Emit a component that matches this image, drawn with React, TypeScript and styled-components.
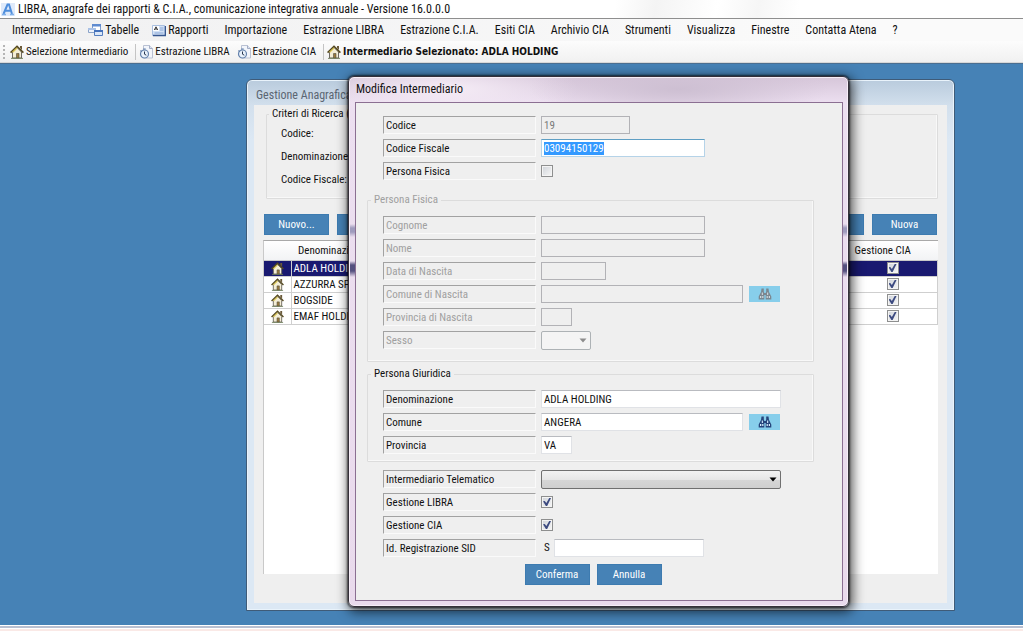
import React, { useEffect, useRef, useState } from "react";
import styled, { createGlobalStyle, css } from "styled-components";

const UI = `"Roboto Condensed", Roboto, "Open Sans", sans-serif`;
const TOOL = `"DejaVu Sans Condensed", "DejaVu Sans", sans-serif`;
const FORM = `"Roboto Condensed", Roboto, "Liberation Sans", sans-serif`;

const GlobalStyle = createGlobalStyle`
  * { box-sizing: border-box; }
  body { margin: 0; font: 11px/14px ${FORM}; color: #111; }
  button, input, select { font: inherit; color: inherit; margin: 0; }
`;

const Shell = styled.div`
  display: flex;
  flex-direction: column;
  height: 100vh;
  min-height: 600px;
  overflow: hidden;
`;

const TitleBar = styled.header`
  display: flex;
  align-items: center;
  gap: 3px;
  height: 19px;
  padding-left: 1px;
  border-bottom: 1px solid #8e8e8e;
  background: linear-gradient(100deg, #fff 60%, #f4f4f4 64%, #fff 70%, #f6f6f6 74%, #fff 78%);
  font: 12px/18px ${UI};
  white-space: nowrap;
`;

const MenuBar = styled.nav`
  display: flex;
  align-items: center;
  gap: 16px;
  height: 22px;
  padding-left: 12px;
  background: linear-gradient(90deg, #f0f0f1, #fafafa 80%);
`;

const MenuItem = styled.button`
  display: flex;
  align-items: center;
  gap: 2px;
  padding: 0;
  border: 0;
  background: none;
  font: 12px/16px ${UI};
  white-space: nowrap;
  svg { margin-left: -3px; }
`;

const ToolBar = styled.div`
  display: flex;
  align-items: center;
  gap: 7px;
  height: 22px;
  padding-left: 3px;
  background: linear-gradient(#fcfcfc, #f1f1f1);
  border-bottom: 1px solid #d8d8d8;
`;

const Grip = styled.span`
  width: 2px;
  height: 14px;
  margin-right: -2px;
  background: repeating-linear-gradient(#b5b5b5 0 2px, transparent 2px 4px);
`;

const Separator = styled.span`
  width: 1px;
  height: 16px;
  margin-right: -4px;
  background: #c4c4c4;
`;

const ToolItem = styled.button<{ $strong?: boolean }>`
  display: flex;
  align-items: center;
  gap: 2px;
  padding: 0;
  border: 0;
  background: none;
  font: ${(p) => (p.$strong ? `bold 10px/14px ${TOOL}` : `11px/14px ${UI}`)};
  white-space: nowrap;
`;

const Desktop = styled.main`
  position: relative;
  flex: 1;
  background: #4682b6;
  border-top: 1px solid #4b6f91;
  overflow: hidden;
`;

const StatusStrip = styled.footer`
  height: 6px;
  border-top: 1px solid #fff;
  background: linear-gradient(#b9bfd0 0 2px, #fff 2px 3px, #fae9e6 3px);
`;

const SearchWindow = styled.section`
  position: absolute;
  left: 246px;
  top: 15px;
  width: 709px;
  height: 532px;
  display: flex;
  flex-direction: column;
  padding: 0 7px 7px;
  border: 1px solid #3f5b78;
  border-radius: 6px 6px 0 0;
  background: linear-gradient(#b9cbdd, #d3e0ed 26px, #dce8f4 60px);
  box-shadow: inset 0 0 0 1px #e9f3fb;
`;

const WindowTitle = styled.h2<{ $dim?: boolean }>`
  flex: none;
  height: 25px;
  margin: 0;
  padding-left: ${(p) => (p.$dim ? "2px" : "1px")};
  font: 12px/${(p) => (p.$dim ? "30px" : "25px")} ${UI};
  color: ${(p) => (p.$dim ? "#5b6672" : "#111")};
`;

const SearchBody = styled.div`
  flex: 1;
  display: flex;
  flex-direction: column;
  padding: 2px 9px 29px;
  background: #efefef;
`;

const Group = styled.fieldset<{ $roomy?: boolean }>`
  margin: 0;
  padding: 9px 14px ${(p) => (p.$roomy ? "7px" : "2px")} 15px;
  border: 1px solid #dcdcdc;
  border-radius: 1px;
  box-shadow: inset -1px -1px #f8f8f8;
  min-width: 0;
  &:disabled { color: #a0a0a0; }
`;

const Legend = styled.legend`
  height: 14px;
  padding: 0 3px;
  margin-left: -12px;
`;

const Criteria = styled(Group)`
  margin-left: 3px;
  padding: 1px 14px 7px 14px;
`;

const CriteriaRow = styled.div`
  display: grid;
  grid-template-columns: 84px 160px;
  align-items: center;
  height: 23px;
`;

const CommandBar = styled.div`
  display: flex;
  gap: 8px;
  margin: 15px 1px 0;
`;

const Spacer = styled.span`
  flex: 1;
`;

const ActionButton = styled.button`
  width: 65px;
  height: 21px;
  padding: 0;
  border: 1px solid #3d7bb0;
  background: #4682b6;
  color: #fff;
  line-height: 18px;
`;

const ListPanel = styled.div`
  flex: 1;
  margin-top: 5px;
  border-top: 1px solid #a9a9a9;
  border-left: 1px solid #c9c9c9;
  background: #fff;
`;

const List = styled.table`
  width: 100%;
  border-collapse: collapse;
  table-layout: fixed;
`;

const HeadCell = styled.th<{ $w?: number }>`
  width: ${(p) => (p.$w ? `${p.$w}px` : "auto")};
  height: 19px;
  padding: 2px 6px 0 7px;
  background: linear-gradient(#fff, #f2f3f5);
  border-bottom: 1px solid #c8c8c8;
  font-weight: normal;
  text-align: left;
`;

const ListRow = styled.tr<{ $selected?: boolean }>`
  height: 16px;
  background: ${(p) => (p.$selected ? "#191970" : "#fff")};
  color: ${(p) => (p.$selected ? "#fff" : "#111")};
`;

const Cell = styled.td<{ $center?: boolean }>`
  padding: 0 2px;
  border: 1px solid #cfcfcf;
  border-top: 0;
  border-left: 0;
  line-height: 15px;
  text-align: ${(p) => (p.$center ? "center" : "left")};
  white-space: nowrap;
  svg, input { display: block; margin: 0 auto; }
`;

const Dialog = styled.form`
  position: absolute;
  left: 348px;
  top: 12px;
  width: 501px;
  height: 531px;
  display: flex;
  flex-direction: column;
  padding: 0 5px 5px 6px;
  border: 1px solid #35303a;
  border-radius: 6px;
  background:
    linear-gradient(90deg, #fff 0 1px, transparent 1px 498px, #fff 498px),
    linear-gradient(transparent 147px, #9f9bbd 151px 155px, transparent 160px 184px, #55517f 188px 194px, transparent 200px),
    radial-gradient(ellipse 150px 30px at 330px 12px, #cdbfd2, transparent),
    radial-gradient(ellipse 130px 30px at 100px 12px, #f5ecf6, transparent),
    linear-gradient(#d6c6d9, #ecdff0 26px, #e9daec);
  box-shadow: inset 0 0 0 1px #f6eef7, 0 0 2px 1px rgba(0, 0, 0, 0.6), 2px 3px 12px 2px rgba(0, 0, 0, 0.65);
`;

const DialogBody = styled.div`
  flex: 1;
  display: flex;
  flex-direction: column;
  gap: 5px;
  padding: 13px 28px 0 11px;
  border: 1px solid #8b6f92;
  background: #efefef;
`;

const Block = styled.div<{ $before?: boolean }>`
  padding-left: 16px;
  ${(p) => (p.$before ? "padding-bottom: 3px;" : "padding-top: 3px;")}
`;

const Row = styled.div`
  display: grid;
  grid-template-columns: 153px 1fr;
  column-gap: 5px;
  align-items: start;
  height: 23px;
`;

const FieldLabel = styled.label`
  height: 18px;
  padding-left: 2px;
  border: 1px solid;
  border-color: #a2a2a2 #fafafa #fafafa #a2a2a2;
  line-height: 18px;
  white-space: nowrap;
`;

const Controls = styled.div`
  display: flex;
  align-items: center;
  gap: 6px;
  height: 18px;
`;

const fieldEdge = css`
  border: 1px solid #e0e2e6;
  border-top-color: #b9bbc0;
  background: #fff;
`;

const TextBox = styled.input<{ $w: number }>`
  width: ${(p) => p.$w}px;
  height: 18px;
  padding: 0 2px;
  border-radius: 0;
  outline: 0;
  ${fieldEdge}
  &:focus { border-color: #5f9fc4 #b5d3e8 #b5d3e8; }
  &:disabled { border-color: #b2b2b6; background: #efefef; color: #7a7a7a; }
  &::selection { background: #3399ff; color: #fff; }
`;

const Tick = styled.input.attrs({ type: "checkbox" })`
  appearance: none;
  flex: none;
  position: relative;
  width: 12px;
  height: 12px;
  border: 1px solid #8e8f8f;
  background: linear-gradient(135deg, #cfd3d9, #f7f7f7);
  box-shadow: inset 0 0 0 1px #f4f4f4;
  &:checked::before {
    content: "";
    position: absolute;
    inset: 1px;
    background: #3c4a80;
    clip-path: polygon(0 42%, 22% 36%, 42% 62%, 78% 0, 100% 0, 52% 100%, 36% 100%);
  }
`;

const SelectWrap = styled.div<{ $w: number }>`
  display: flex;
  align-items: center;
  width: ${(p) => p.$w}px;
  height: 19px;
  svg { flex: none; margin-left: -12px; pointer-events: none; }
`;

const Select = styled.select`
  appearance: none;
  width: 100%;
  height: 19px;
  padding: 0 14px 0 3px;
  border: 1px solid #707070;
  border-radius: 2px;
  background: linear-gradient(#f2f2f2, #e6e6e6 50%, #d6d6d6 52%, #cfcfcf);
  &:disabled { border-color: #adb2b5; background: #f4f4f4; opacity: 1; }
`;

const FindButton = styled.button`
  display: flex;
  align-items: center;
  justify-content: center;
  width: 31px;
  height: 16px;
  padding: 0;
  border: 0;
  background: #87ceeb;
`;

const Prefix = styled.span`
  width: 7px;
  padding-left: 3px;
`;

const Buttons = styled.div`
  display: flex;
  justify-content: center;
  gap: 7px;
  margin-top: -3px;
  padding-left: 5px;
`;

const HouseIcon = ({ size = 14 }: { size?: number }) => (
  <svg width={size} height={size} viewBox="0 0 14 14" aria-hidden="true">
    <path d="M10 1h2v4l-2-2z" fill="#6b5a3a" />
    <path d="M2.5 7 7 2.5 11.5 7v6h-9z" fill="#f4eed6" stroke="#5f5a52" strokeWidth=".9" />
    <path d="M.6 7.600 7 1.200l6.400 6.400" fill="none" stroke="#54481f" strokeWidth="1.500" />
    <path d="M2.600 7.300 7 3" stroke="#d9c34f" strokeWidth="1.200" />
    <path d="M6.500 8.500h2.500V13H6.500z" fill="#9a7b3c" stroke="#4f4a42" strokeWidth=".6" />
    <path d="M1 13.400h12" stroke="#6f7f5a" strokeWidth=".9" />
  </svg>
);

const ClockPageIcon = () => (
  <svg width="14" height="14" viewBox="0 0 14 14" aria-hidden="true">
    <path d="M4.500.5h6l3 3v9.500h-9z" fill="#f2f5fb" stroke="#b9c1d3" />
    <path d="M10.500.5v3h3" fill="#dbe2f1" stroke="#a3adc4" />
    <circle cx="5.500" cy="9" r="4" fill="#e8f1fb" stroke="#6482ac" strokeWidth="1.200" />
    <path d="M5.500 6.500v2.700l1.800 1" fill="none" stroke="#26354f" />
    <path d="M4.300 4h2.400M1.500 5.500l1 1" stroke="#5878a6" strokeWidth="1.200" />
  </svg>
);

const TablesIcon = () => (
  <svg width="15" height="14" viewBox="0 0 15 14" aria-hidden="true">
    <path d="M4.500 1.500h8v6h-8z" fill="#fff" stroke="#7d9ccc" />
    <path d="M4 1h9v2.500H4z" fill="#5f8bd0" />
    <path d="M.5 5.500h7v4h-7z" fill="#eef3fb" stroke="#8aa3c9" />
    <path d="M0 5h8v2H0z" fill="#a9c1e6" />
    <path d="M6.500 7.500h8v5h-8z" fill="#dbe7f8" stroke="#567fbf" />
    <path d="M6 7h9v2H6z" fill="#4471bb" />
  </svg>
);

const ReportIcon = () => (
  <svg width="14" height="13" viewBox="0 0 14 13" aria-hidden="true">
    <path d="M.5 1.500h12v10H.5z" fill="#d3e1f5" stroke="#a9bfe0" />
    <path d="M1 11.500h12.500V2" fill="none" stroke="#36568f" strokeWidth="1.300" />
    <path d="M1 2h6v5H1z" fill="#fff" />
    <path d="M2.300 6 4 2.800 5.700 6M3 5h2" fill="none" stroke="#222" strokeWidth=".9" />
    <path d="M8 4h3.500M8 6h3.500M2.500 9h9" stroke="#86a5d6" />
  </svg>
);

const AppLogo = () => (
  <svg width="14" height="15" viewBox="0 0 14 15" aria-hidden="true">
    <path d="M0 1h14v13H0z" fill="#dfeafa" />
    <path d="M2.500 12 6.500 2.500h1.500L11 12M4.200 8.700h5.400" fill="none" stroke="#4f8edc" strokeWidth="2" />
    <path d="M1 12.500h4M9 12.500h4" stroke="#7fb0ea" strokeWidth="1.400" />
  </svg>
);

const Binoculars = ({ muted }: { muted?: boolean }) => {
  const ink = muted ? "#7b8790" : "#26457c";
  const glass = muted ? "#cfd9df" : "#d6efff";
  return (
    <svg width="14" height="12" viewBox="0 0 14 12" aria-hidden="true">
      <path d="M3.500.5h2.300v3L6.300 5v6.500H.7V8.500L3 4zM10.500.5H8.200v3L7.700 5v6.500h5.600V8.500L11 4z" fill={ink} />
      <path d="M2 8h1.300v2H2zM4.200 8h1.200v2H4.200zM8.600 8h1.200v2H8.600zM10.800 8H12v2h-1.200zM3.800 4.500h1.100V7H3.800zM9.100 4.500h1.100V7H9.100z" fill={glass} />
      <path d="M6 5h2v2H6z" fill={ink} />
    </svg>
  );
};

const Arrow = ({ color }: { color: string }) => (
  <svg width="8" height="5" viewBox="0 0 8 5" aria-hidden="true">
    <path d="M.5.5h7L4 4.500z" fill={color} />
  </svg>
);

const menu: { label: string; icon?: React.ReactNode }[] = [
  { label: "Intermediario" },
  { label: "Tabelle", icon: <TablesIcon /> },
  { label: "Rapporti", icon: <ReportIcon /> },
  { label: "Importazione" },
  { label: "Estrazione LIBRA" },
  { label: "Estrazione C.I.A." },
  { label: "Esiti CIA" },
  { label: "Archivio CIA" },
  { label: "Strumenti" },
  { label: "Visualizza" },
  { label: "Finestre" },
  { label: "Contatta Atena" },
  { label: "?" },
];

const companies = ["ADLA HOLDING", "AZZURRA SPA", "BOGSIDE", "EMAF HOLDING"];

type FieldProps = { id: string; label: string; children: React.ReactNode };

const Field = ({ id, label, children }: FieldProps) => (
  <Row>
    <FieldLabel htmlFor={id}>{label}</FieldLabel>
    <Controls>{children}</Controls>
  </Row>
);

const SearchPanel = () => (
  <SearchWindow>
    <WindowTitle $dim>Gestione Anagrafica</WindowTitle>
    <SearchBody>
      <Criteria>
        <Legend>Criteri di Ricerca (Filtri)</Legend>
        {["Codice:", "Denominazione:", "Codice Fiscale:"].map((label, i) => (
          <CriteriaRow key={label}>
            <label htmlFor={`filter${i}`}>{label}</label>
            <TextBox id={`filter${i}`} $w={160} />
          </CriteriaRow>
        ))}
      </Criteria>
      <CommandBar>
        <ActionButton>Nuovo...</ActionButton>
        <ActionButton>Modifica</ActionButton>
        <Spacer />
        <ActionButton>Cerca</ActionButton>
        <ActionButton>Nuova</ActionButton>
      </CommandBar>
      <ListPanel>
        <List>
          <thead>
            <tr>
              <HeadCell $w={27} />
              <HeadCell>Denominazione</HeadCell>
              <HeadCell $w={90}>Gestione CIA</HeadCell>
            </tr>
          </thead>
          <tbody>
            {companies.map((name, i) => (
              <ListRow key={name} $selected={i === 0}>
                <Cell $center><HouseIcon size={13} /></Cell>
                <Cell>{name}</Cell>
                <Cell $center>
                  <Tick defaultChecked aria-label={`Gestione CIA ${name}`} />
                </Cell>
              </ListRow>
            ))}
          </tbody>
        </List>
      </ListPanel>
    </SearchBody>
  </SearchWindow>
);

const EditDialog = () => {
  const taxCode = useRef<HTMLInputElement>(null);
  const [person, setPerson] = useState(false);

  useEffect(() => {
    taxCode.current?.focus();
    taxCode.current?.select();
  }, []);

  return (
    <Dialog onSubmit={(e) => e.preventDefault()}>
      <WindowTitle>Modifica Intermediario</WindowTitle>
      <DialogBody>
        <Block $before>
          <Field id="code" label="Codice">
            <TextBox id="code" $w={89} defaultValue="19" disabled />
          </Field>
          <Field id="tax" label="Codice Fiscale">
            <TextBox id="tax" ref={taxCode} $w={164} defaultValue="03094150129" />
          </Field>
          <Field id="person" label="Persona Fisica">
            <Tick id="person" checked={person} onChange={(e) => setPerson(e.target.checked)} />
          </Field>
        </Block>
        <Group disabled={!person} $roomy>
          <Legend>Persona Fisica</Legend>
          <Field id="surname" label="Cognome"><TextBox id="surname" $w={164} /></Field>
          <Field id="name" label="Nome"><TextBox id="name" $w={164} /></Field>
          <Field id="birth" label="Data di Nascita"><TextBox id="birth" $w={65} /></Field>
          <Field id="birthTown" label="Comune di Nascita">
            <TextBox id="birthTown" $w={202} />
            <FindButton type="button" aria-label="Cerca comune di nascita"><Binoculars muted /></FindButton>
          </Field>
          <Field id="birthProv" label="Provincia di Nascita"><TextBox id="birthProv" $w={31} /></Field>
          <Field id="sex" label="Sesso">
            <SelectWrap $w={50}>
              <Select id="sex"><option /></Select>
              <Arrow color="#8c8c8c" />
            </SelectWrap>
          </Field>
        </Group>
        <Group>
          <Legend>Persona Giuridica</Legend>
          <Field id="company" label="Denominazione">
            <TextBox id="company" $w={240} defaultValue="ADLA HOLDING" />
          </Field>
          <Field id="town" label="Comune">
            <TextBox id="town" $w={202} defaultValue="ANGERA" />
            <FindButton type="button" aria-label="Cerca comune"><Binoculars /></FindButton>
          </Field>
          <Field id="prov" label="Provincia">
            <TextBox id="prov" $w={31} defaultValue="VA" />
          </Field>
        </Group>
        <Block>
          <Field id="agent" label="Intermediario Telematico">
            <SelectWrap $w={240}>
              <Select id="agent"><option /></Select>
              <Arrow color="#000" />
            </SelectWrap>
          </Field>
          <Field id="libra" label="Gestione LIBRA"><Tick id="libra" defaultChecked /></Field>
          <Field id="cia" label="Gestione CIA"><Tick id="cia" defaultChecked /></Field>
          <Field id="sid" label="Id. Registrazione SID">
            <Prefix>S</Prefix>
            <TextBox id="sid" $w={150} />
          </Field>
        </Block>
        <Buttons>
          <ActionButton type="submit">Conferma</ActionButton>
          <ActionButton type="button">Annulla</ActionButton>
        </Buttons>
      </DialogBody>
    </Dialog>
  );
};

export default function App() {
  return (
    <Shell>
      <GlobalStyle />
      <TitleBar>
        <AppLogo />
        <span>LIBRA, anagrafe dei rapporti &amp; C.I.A., comunicazione integrativa annuale - Versione 16.0.0.0</span>
      </TitleBar>
      <MenuBar>
        {menu.map(({ label, icon }) => (
          <MenuItem key={label}>
            {icon}
            <span>{label}</span>
          </MenuItem>
        ))}
      </MenuBar>
      <ToolBar>
        <Grip />
        <ToolItem><HouseIcon />Selezione Intermediario</ToolItem>
        <Separator />
        <ToolItem><ClockPageIcon />Estrazione LIBRA</ToolItem>
        <ToolItem><ClockPageIcon />Estrazione CIA</ToolItem>
        <Separator />
        <ToolItem $strong><HouseIcon />Intermediario Selezionato: ADLA HOLDING</ToolItem>
      </ToolBar>
      <Desktop>
        <SearchPanel />
        <EditDialog />
      </Desktop>
      <StatusStrip />
    </Shell>
  );
}
